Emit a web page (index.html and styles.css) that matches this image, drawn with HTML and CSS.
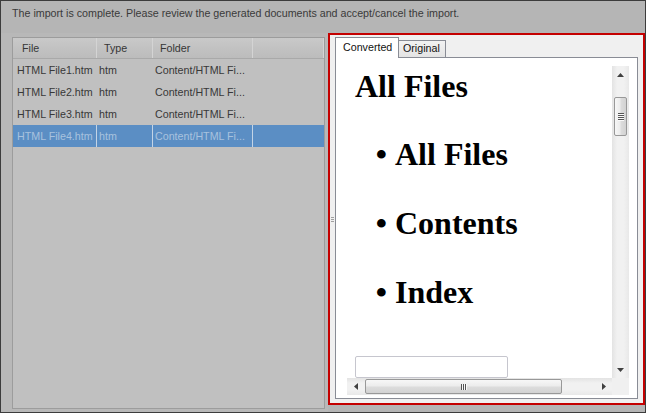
FILE: index.html
```html
<!DOCTYPE html>
<html>
<head>
<meta charset="utf-8">
<link rel="stylesheet" href="styles.css">
</head>
<body>
<div class="window">
  <div class="msg">The import is complete. Please review the generated documents and accept/cancel the import.</div>
  <div class="main">
    <div class="left">
      <div class="listbox">
        <div class="lrow head">
          <div class="c c1">File</div><div class="c c2">Type</div><div class="c c3">Folder</div><div class="c c4"></div>
        </div>
        <div class="lrow"><div class="c c1">HTML File1.htm</div><div class="c c2">htm</div><div class="c c3">Content/HTML Fi...</div><div class="c c4"></div></div>
        <div class="lrow"><div class="c c1">HTML File2.htm</div><div class="c c2">htm</div><div class="c c3">Content/HTML Fi...</div><div class="c c4"></div></div>
        <div class="lrow"><div class="c c1">HTML File3.htm</div><div class="c c2">htm</div><div class="c c3">Content/HTML Fi...</div><div class="c c4"></div></div>
        <div class="lrow sel"><div class="c c1">HTML File4.htm</div><div class="c c2">htm</div><div class="c c3">Content/HTML Fi...</div><div class="c c4"></div></div>
      </div>
    </div>
    <div class="right">
      <div class="grip"><span></span><span></span><span></span></div>
      <div class="tabcol">
        <div class="tabstrip">
          <div class="tab active">Converted</div>
          <div class="tab">Original</div>
        </div>
        <div class="tabpage">
          <div class="webview">
            <div class="page">
              <div class="title">All Files</div>
              <ul class="items">
                <li>All Files</li>
                <li>Contents</li>
                <li>Index</li>
              </ul>
              <div class="textbox"></div>
            </div>
            <div class="vscroll">
              <div class="sbtn"><svg width="7" height="4" viewBox="0 0 7 4"><path d="M0 4 L3.5 0 L7 4 Z" fill="#404040"/></svg></div>
              <div class="vtrack"><div class="vthumb"><i></i><i></i><i></i><i></i></div></div>
              <div class="sbtn"><svg width="7" height="4" viewBox="0 0 7 4"><path d="M0 0 L3.5 4 L7 0 Z" fill="#404040"/></svg></div>
            </div>
            <div class="hscroll">
              <div class="sbtn"><svg width="4" height="7" viewBox="0 0 4 7"><path d="M4 0 L0 3.5 L4 7 Z" fill="#404040"/></svg></div>
              <div class="htrack"><div class="hthumb"><i></i><i></i><i></i></div></div>
              <div class="sbtn"><svg width="4" height="7" viewBox="0 0 4 7"><path d="M0 0 L4 3.5 L0 7 Z" fill="#404040"/></svg></div>
            </div>
            <div class="corner"></div>
          </div>
        </div>
      </div>
    </div>
  </div>
</div>
</body>
</html>
```
FILE: styles.css
```css
html, body { margin: 0; padding: 0; }
body { width: 646px; height: 413px; overflow: hidden; background: #b5b5b5; }
.window {
  width: 646px; height: 413px; box-sizing: border-box;
  border: 1px solid #3c3c3c;
  background: #b5b5b5;
  font-family: "Liberation Sans", Arial, sans-serif;
  font-size: 10.7px;
  color: #383838;
  display: flex; flex-direction: column;
}
.msg { height: 32px; line-height: 24px; padding-left: 11px; white-space: nowrap; color: #3a3a3a; }
.main { display: flex; height: 379px; }
.left { width: 327px; box-sizing: border-box; padding: 4px 3px 3px 11px; background: #b8b8b8; }
.listbox { height: 100%; box-sizing: border-box; border: 1px solid #9c9c9c; background: #c0c0c0; }
.lrow { display: flex; height: 22px; line-height: 22px; white-space: nowrap; }
.lrow.head {
  height: 20px; line-height: 20px; border-bottom: 1px solid #a9a9a9;
  background: linear-gradient(#c9c9c9, #c2c2c2 50%, #bcbcbc);
  color: #363636;
}
.c { box-sizing: border-box; overflow: hidden; }
.c1 { width: 84px; padding-left: 4px; }
.c2 { width: 56px; padding-left: 2px; }
.c3 { width: 100px; padding-left: 2px; }
.c4 { flex: 1; }
.head .c1 { padding-left: 9px; }
.head .c2 { padding-left: 7px; }
.head .c3 { padding-left: 7px; }
.head .c1, .head .c2, .head .c3 { border-right: 1px solid #d4d4d4; }
.head .c4 { border-right: 1px solid #d4d4d4; }
.lrow.sel { background: #5b8ec4; color: #a8c2de; }
.sel .c1, .sel .c2, .sel .c3 { border-right: 1px solid #c3d4e6; }
.right {
  width: 317px; height: 372px; box-sizing: border-box;
  border: 2px solid #c40000; background: #f0f0f0;
  display: flex;
}
.grip { width: 5px; display: flex; flex-direction: column; justify-content: center; align-items: center; gap: 1px; }
.grip span { display: block; width: 3px; height: 1px; background: #a0a0a0; }
.tabcol { flex: 1; margin-right: 5px; padding-top: 2px; margin-bottom: 4px; display: flex; flex-direction: column; }
.tabstrip { height: 20px; display: flex; align-items: flex-end; font-size: 10.7px; color: #111; }
.tab {
  box-sizing: border-box; height: 17px; line-height: 15px; padding: 0 5px 0 4px;
  border: 1px solid #898c95; border-left: none; border-bottom: none;
  background: linear-gradient(#f2f2f2, #e4e4e4);
}
.tab.active {
  height: 21px; margin-bottom: -1px; line-height: 18px; padding: 0 6px 0 7px;
  border-left: 1px solid #898c95; background: #fff; position: relative; z-index: 1;
  width: 64px;
}
.tabpage {
  flex: 1; box-sizing: border-box; border: 1px solid #898c95; background: #fff;
  padding: 8px 8px 3px 11px; display: flex;
}
.webview { flex: 1; display: grid; grid-template-columns: 1fr 17px; grid-template-rows: 1fr 17px; }
.page { overflow: hidden; background: #fff; font-family: "Liberation Serif", "Times New Roman", serif; font-weight: bold; font-size: 32px; line-height: 37px; color: #000; }
.title { padding: 2px 0 0 8px; margin: 0 0 31px 0; white-space: nowrap; }
.items { margin: 0; padding: 0 0 0 48px; list-style: disc; }
.items li { white-space: nowrap; }
.items li::marker { content: "\2022\00a0"; }
.items li + li { margin-top: 32px; }
.textbox { margin: 45px 0 0 8px; width: 153px; height: 22px; box-sizing: border-box; border: 1px solid #c6c6ce; border-radius: 2px; background: #fff; }
.vscroll { display: flex; flex-direction: column; background: linear-gradient(to right, #e3e3e3, #f1f1f1 30%, #f1f1f1 70%, #e8e8e8); }
.hscroll { display: flex; background: linear-gradient(#e3e3e3, #f1f1f1 30%, #f1f1f1 70%, #e8e8e8); }
.corner { background: #f0f0f0; }
.sbtn { width: 17px; height: 17px; flex: none; display: flex; align-items: center; justify-content: center; }
.vtrack { flex: 1; padding-top: 14px; display: flex; justify-content: center; }
.vthumb {
  width: 13px; height: 39px; box-sizing: border-box; border: 1px solid #989898; border-radius: 2px;
  background: linear-gradient(to right, #f7f7f7, #ececec 45%, #dcdcdc 55%, #d2d2d2);
  display: flex; flex-direction: column; align-items: center; justify-content: center; gap: 1px;
}
.vthumb i { display: block; width: 6px; height: 1px; background: #555; box-shadow: 0 1px 0 #fafafa; }
.htrack { flex: 1; padding-left: 1px; display: flex; align-items: center; }
.hthumb {
  width: 197px; height: 15px; box-sizing: border-box; border: 1px solid #989898; border-radius: 2px;
  background: linear-gradient(#f7f7f7, #ececec 45%, #dcdcdc 55%, #d2d2d2);
  display: flex; align-items: center; justify-content: center; gap: 1px;
}
.hthumb i { display: block; width: 1px; height: 6px; background: #555; box-shadow: 1px 0 0 #fafafa; }
```
